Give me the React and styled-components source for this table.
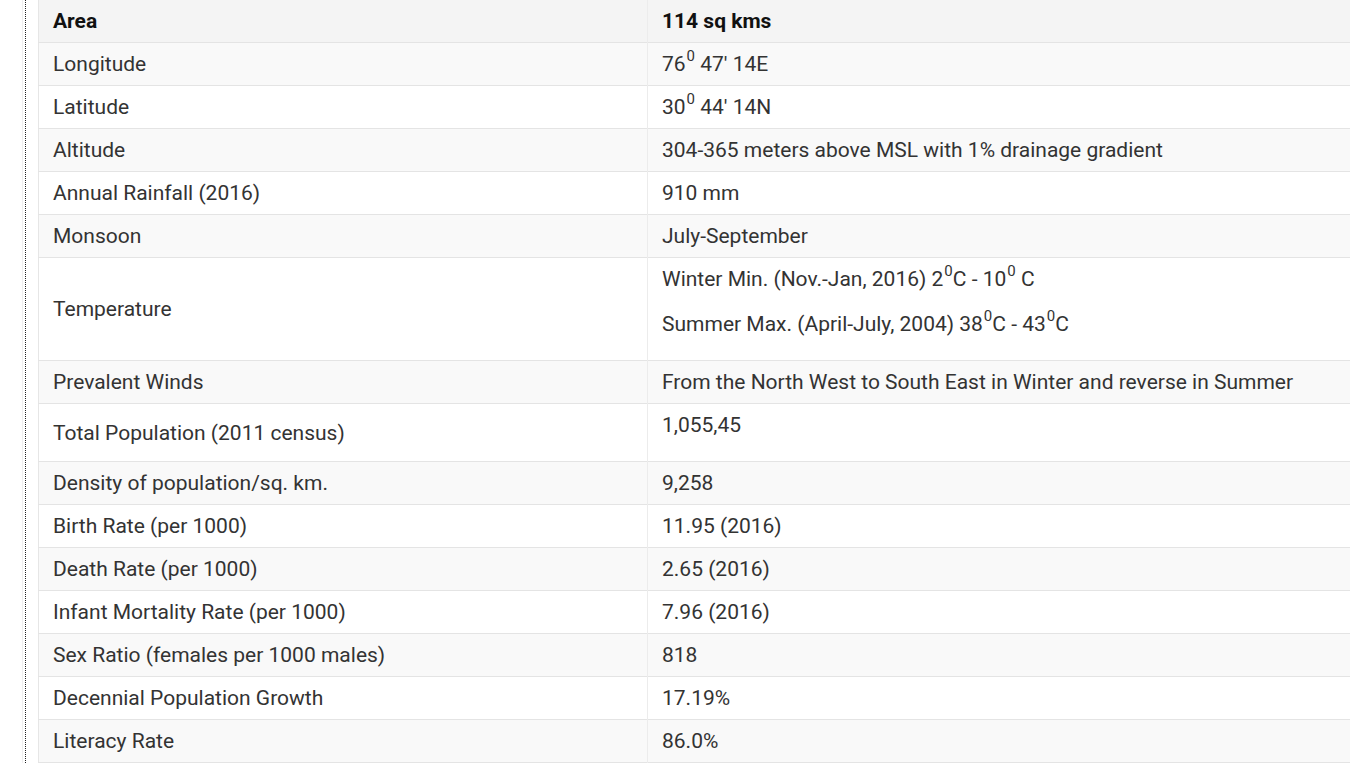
import styled, { createGlobalStyle } from "styled-components";

const GlobalStyle = createGlobalStyle`
  html, body {
    margin: 0;
    padding: 0;
    background: #ffffff;
    overflow: hidden;
  }
  body {
    font-family: Roboto, "Liberation Sans", Arial, sans-serif;
  }
`;

const filas = [
  { label: "Longitude", value: [<>76<sup>0</sup> 47' 14E</>] },
  { label: "Latitude", value: [<>30<sup>0</sup> 44' 14N</>] },
  { label: "Altitude", value: ["304-365 meters above MSL with 1% drainage gradient"] },
  { label: "Annual Rainfall (2016)", value: ["910 mm"] },
  { label: "Monsoon", value: ["July-September"] },
  {
    label: "Temperature",
    value: [
      <>Winter Min. (Nov.-Jan, 2016) 2<sup>0</sup>C - 10<sup>0</sup> C</>,
      <>Summer Max. (April-July, 2004) 38<sup>0</sup>C - 43<sup>0</sup>C</>,
    ],
    parrafos: true,
  },
  { label: "Prevalent Winds", value: ["From the North West to South East in Winter and reverse in Summer"] },
  { label: "Total Population (2011 census)", value: ["1,055,45"], parrafos: true },
  { label: "Density of population/sq. km.", value: ["9,258"] },
  { label: "Birth Rate (per 1000)", value: ["11.95 (2016)"] },
  { label: "Death Rate (per 1000)", value: ["2.65 (2016)"] },
  { label: "Infant Mortality Rate (per 1000)", value: ["7.96 (2016)"] },
  { label: "Sex Ratio (females per 1000 males)", value: ["818"] },
  { label: "Decennial Population Growth", value: ["17.19%"] },
  { label: "Literacy Rate", value: ["86.0%"] },
];

const App = () => {
  return (
    <>
      <GlobalStyle />
      <Page>
        <Gutter />
        <Rail>
          <Content>
            <Tabla>
              <thead>
                <Fila>
                  <Cabecera $primera>Area</Cabecera>
                  <Cabecera>114 sq kms</Cabecera>
                </Fila>
              </thead>
              <tbody>
                {filas.map((fila, i) => (
                  <Fila key={fila.label} $gris={i % 2 === 0}>
                    <Celda $primera>{fila.label}</Celda>
                    <Celda>
                      {fila.parrafos
                        ? fila.value.map((v, j) => (
                            <Parrafo key={j} $ultimo={j === fila.value.length - 1}>
                              {v}
                            </Parrafo>
                          ))
                        : fila.value[0]}
                    </Celda>
                  </Fila>
                ))}
              </tbody>
            </Tabla>
          </Content>
        </Rail>
      </Page>
    </>
  );
};

const Page = styled.div`
  display: flex;
  min-height: 763px;
  width: 1350px;
  overflow: hidden;
`;

const Gutter = styled.div`
  width: 22px;
  flex-shrink: 0;
`;

const Rail = styled.div`
  flex: 1;
  display: flex;
  border-left: 1px solid #efefef;
  padding-left: 2px;
`;

const Content = styled.div`
  flex: 1;
  border-left: 1px dotted #222;
  padding-left: 12px;
`;

const Tabla = styled.table`
  border-collapse: collapse;
  width: 1330px;
  table-layout: fixed;
  border-left: 1px solid #e6e6e6;
  font-size: 21px;
  line-height: 24px;
  color: #333;

  sup {
    font-size: 15px;
    line-height: 0;
    position: relative;
    top: -2px;
    vertical-align: super;
    margin-left: 1px;
  }
`;

const Fila = styled.tr`
  background: ${(p) => (p.$gris ? "#f9f9f9" : "#ffffff")};
  border-bottom: 1px solid #e4e4e4;

  thead & {
    background: #f4f4f4;
  }
`;

const Cabecera = styled.th`
  width: ${(p) => (p.$primera ? "580px" : "auto")};
  text-align: left;
  font-weight: 700;
  color: #111;
  padding: 9px 14px 9px 14px;
  border-right: ${(p) => (p.$primera ? "1px solid #ececec" : "none")};
  vertical-align: middle;
`;

const Celda = styled.td`
  padding: 9px 14px 9px 14px;
  border-right: ${(p) => (p.$primera ? "1px solid #ececec" : "none")};
  vertical-align: middle;
`;

const Parrafo = styled.p`
  margin: 0 0 ${(p) => (p.$ultimo ? "15px" : "21px")} 0;
`;

export default App;
